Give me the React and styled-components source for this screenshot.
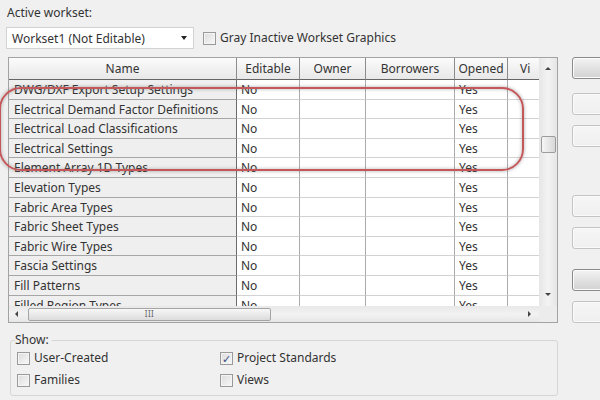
import React from 'react';
import styled, { createGlobalStyle } from 'styled-components';

const GlobalStyle = createGlobalStyle`
  html, body {
    margin: 0;
    padding: 0;
    background: #f0f0f0;
  }
  * { box-sizing: border-box; }
`;

const Window = styled.div`
  position: relative;
  width: 600px;
  height: 400px;
  overflow: hidden;
  display: flex;
  background: #f0f0f0;
  font-family: "Noto Sans", "Open Sans", sans-serif;
  font-size: 12px;
  color: #333;
`;

const Main = styled.div`
  width: 558px;
  flex: none;
  display: flex;
  flex-direction: column;
`;

const Label = styled.div`
  margin: 5px 0 0 7px;
  height: 16px;
  line-height: 16px;
`;

const WorksetRow = styled.div`
  display: flex;
  align-items: center;
  margin: 6px 0 0 6px;
  gap: 9px;
`;

const Select = styled.div`
  width: 188px;
  height: 22px;
  background: #fff;
  border: 1px solid #d2d2d2;
  display: flex;
  align-items: center;
  justify-content: space-between;
  padding: 0 6px 0 5px;
`;

const Arrow = styled.span`
  width: 0;
  height: 0;
  border-left: 3.5px solid transparent;
  border-right: 3.5px solid transparent;
  border-top: 4px solid #222;
`;

const CheckLabel = styled.label`
  display: flex;
  align-items: center;
  gap: 4px;
  height: 16px;
  line-height: 16px;
`;

const Box = styled.span`
  width: 13px;
  height: 13px;
  border: 1px solid #9a9a9a;
  background: linear-gradient(135deg, #dcdcdc, #f8f8f8);
  box-shadow: inset 0 0 0 1px #f4f4f4;
  display: flex;
  align-items: center;
  justify-content: center;
  color: #3b4f86;
  font-size: 11px;
  line-height: 1;
`;

const Frame = styled.div`
  margin: 8px 0 0 8px;
  width: 550px;
  height: 266px;
  border: 1px solid #a3a3a3;
  display: grid;
  grid-template-columns: 1fr 18px;
  grid-template-rows: 1fr 16px;
  background: #ececec;
`;

const Grid = styled.div`
  overflow: hidden;
  background: #fff;
`;

const Row = styled.div`
  display: flex;
  height: ${p => (p.$head ? 22 : 19.6)}px;
`;

const HeadCell = styled.div`
  flex: none;
  width: ${p => p.$w}px;
  background: linear-gradient(#fbfbfb, #e8e8e8);
  border-right: 1px solid #8c8c8c;
  border-bottom: 1px solid #666;
  text-align: ${p => (p.$left ? 'left' : 'center')};
  padding-left: ${p => (p.$left ? 12 : 0)}px;
  line-height: 21px;
  white-space: nowrap;
`;

const NameCell = styled.div`
  flex: none;
  width: 228px;
  background: #efefef;
  border-right: 1px solid #6c6c6c;
  border-bottom: 1px solid #a6a6a6;
  padding-left: 5px;
  line-height: 19px;
  white-space: nowrap;
  overflow: hidden;
`;

const DataCell = styled.div`
  flex: none;
  width: ${p => p.$w}px;
  background: #fff;
  border-right: 1px solid #ababab;
  border-bottom: 1px solid #d2d2d2;
  padding-left: 4px;
  line-height: 19px;
  white-space: nowrap;
`;

const VScroll = styled.div`
  background: linear-gradient(90deg, #e6e6e6, #f3f3f3 50%, #e6e6e6);
  display: flex;
  flex-direction: column;
  align-items: center;
  padding: 9px 0 10px;
`;

const Tri = styled.span`
  width: 0;
  height: 0;
  border-left: 3px solid transparent;
  border-right: 3px solid transparent;
  ${p => (p.$up ? 'border-bottom: 3px solid #444;' : 'border-top: 3px solid #444;')}
`;

const VThumb = styled.div`
  width: 15px;
  height: 17px;
  margin-top: 66px;
  margin-bottom: auto;
  border: 1px solid #9c9c9c;
  border-radius: 2px;
  background: linear-gradient(90deg, #f6f6f6, #d8d8d8);
`;

const HScroll = styled.div`
  background: linear-gradient(#e8e8e8, #f2f2f2 50%, #e6e6e6);
  display: flex;
  align-items: center;
  padding: 0 8px 0 6px;
`;

const SideTri = styled.span`
  width: 0;
  height: 0;
  border-top: 3px solid transparent;
  border-bottom: 3px solid transparent;
  ${p => (p.$left ? 'border-right: 3px solid #444;' : 'border-left: 3px solid #444;')}
`;

const HThumb = styled.div`
  width: 243px;
  height: 13px;
  margin-left: 10px;
  margin-right: auto;
  border: 1px solid #a5a5a5;
  border-radius: 2px;
  background: linear-gradient(#f7f7f7, #dcdcdc);
  display: flex;
  align-items: center;
  justify-content: center;
  font-size: 8px;
  color: #666;
  letter-spacing: 0.5px;
  line-height: 1;
`;

const Corner = styled.div`
  background: #ececec;
`;

const ShowGroup = styled.fieldset`
  margin: 10px 0 0 10px;
  width: 548px;
  height: 63px;
  border: 1px solid #d6d6d6;
  border-radius: 3px;
  padding: 0 0 0 6px;
  display: grid;
  grid-template-columns: 203px 1fr;
  grid-template-rows: 22px 22px;
  align-items: center;
`;

const Legend = styled.legend`
  padding: 0 3px 0 0;
  margin-left: -2px;
  line-height: 14px;
`;

const Buttons = styled.div`
  flex: none;
  margin-left: 14px;
  padding-top: 57px;
  display: flex;
  flex-direction: column;
`;

const Btn = styled.div`
  width: 70px;
  height: 22px;
  margin-top: ${p => p.$gap || 0}px;
  border-radius: 3px;
  border: 1px solid ${p => (p.$on ? '#8a8a8a' : '#c4c4c4')};
  background: ${p =>
    p.$on ? 'linear-gradient(#f4f4f4, #e2e2e2 50%, #d2d2d2)' : 'linear-gradient(#f6f6f6, #efefef)'};
  box-shadow: inset 0 0 0 1px ${p => (p.$on ? '#fcfcfc' : '#fafafa')};
`;

const Highlight = styled.div`
  position: absolute;
  left: -1px;
  top: 87px;
  width: 525px;
  height: 84px;
  border: 2px solid #c4575a;
  border-radius: 22px;
  box-shadow: 0 0 3px 1px rgba(110, 110, 110, 0.35), inset 0 0 3px 1px rgba(110, 110, 110, 0.3);
  pointer-events: none;
`;

const columns = [
  { title: 'Name', w: 228 },
  { title: 'Editable', w: 63 },
  { title: 'Owner', w: 66 },
  { title: 'Borrowers', w: 89 },
  { title: 'Opened', w: 53 },
  { title: 'Vi', w: 60, left: true },
];

const rows = [
  'DWG/DXF Export Setup Settings',
  'Electrical Demand Factor Definitions',
  'Electrical Load Classifications',
  'Electrical Settings',
  'Element Array 1D Types',
  'Elevation Types',
  'Fabric Area Types',
  'Fabric Sheet Types',
  'Fabric Wire Types',
  'Fascia Settings',
  'Fill Patterns',
  'Filled Region Types',
];

const buttons = [
  { gap: 0, on: true },
  { gap: 14 },
  { gap: 10 },
  { gap: 48 },
  { gap: 10 },
  { gap: 20, on: true },
  { gap: 10 },
];

const Check = ({ checked, children }) => (
  <CheckLabel>
    <Box>{checked ? '✓' : ''}</Box>
    {children}
  </CheckLabel>
);

export default function App() {
  return (
    <>
      <GlobalStyle />
      <Window>
        <Main>
          <Label>Active workset:</Label>
          <WorksetRow>
            <Select>
              <span>Workset1 (Not Editable)</span>
              <Arrow />
            </Select>
            <Check>Gray Inactive Workset Graphics</Check>
          </WorksetRow>

          <Frame>
            <Grid>
              <Row $head>
                {columns.map(c => (
                  <HeadCell key={c.title} $w={c.w} $left={c.left}>{c.title}</HeadCell>
                ))}
              </Row>
              {rows.map(name => (
                <Row key={name}>
                  <NameCell>{name}</NameCell>
                  <DataCell $w={63}>No</DataCell>
                  <DataCell $w={66} />
                  <DataCell $w={89} />
                  <DataCell $w={53}>Yes</DataCell>
                  <DataCell $w={60} />
                </Row>
              ))}
            </Grid>
            <VScroll>
              <Tri $up />
              <VThumb />
              <Tri />
            </VScroll>
            <HScroll>
              <SideTri $left />
              <HThumb>III</HThumb>
              <SideTri />
            </HScroll>
            <Corner />
          </Frame>

          <ShowGroup>
            <Legend>Show:</Legend>
            <Check>User-Created</Check>
            <Check checked>Project Standards</Check>
            <Check>Families</Check>
            <Check>Views</Check>
          </ShowGroup>
        </Main>

        <Buttons>
          {buttons.map((b, i) => (
            <Btn key={i} $gap={b.gap} $on={b.on} />
          ))}
        </Buttons>

        <Highlight />
      </Window>
    </>
  );
}
